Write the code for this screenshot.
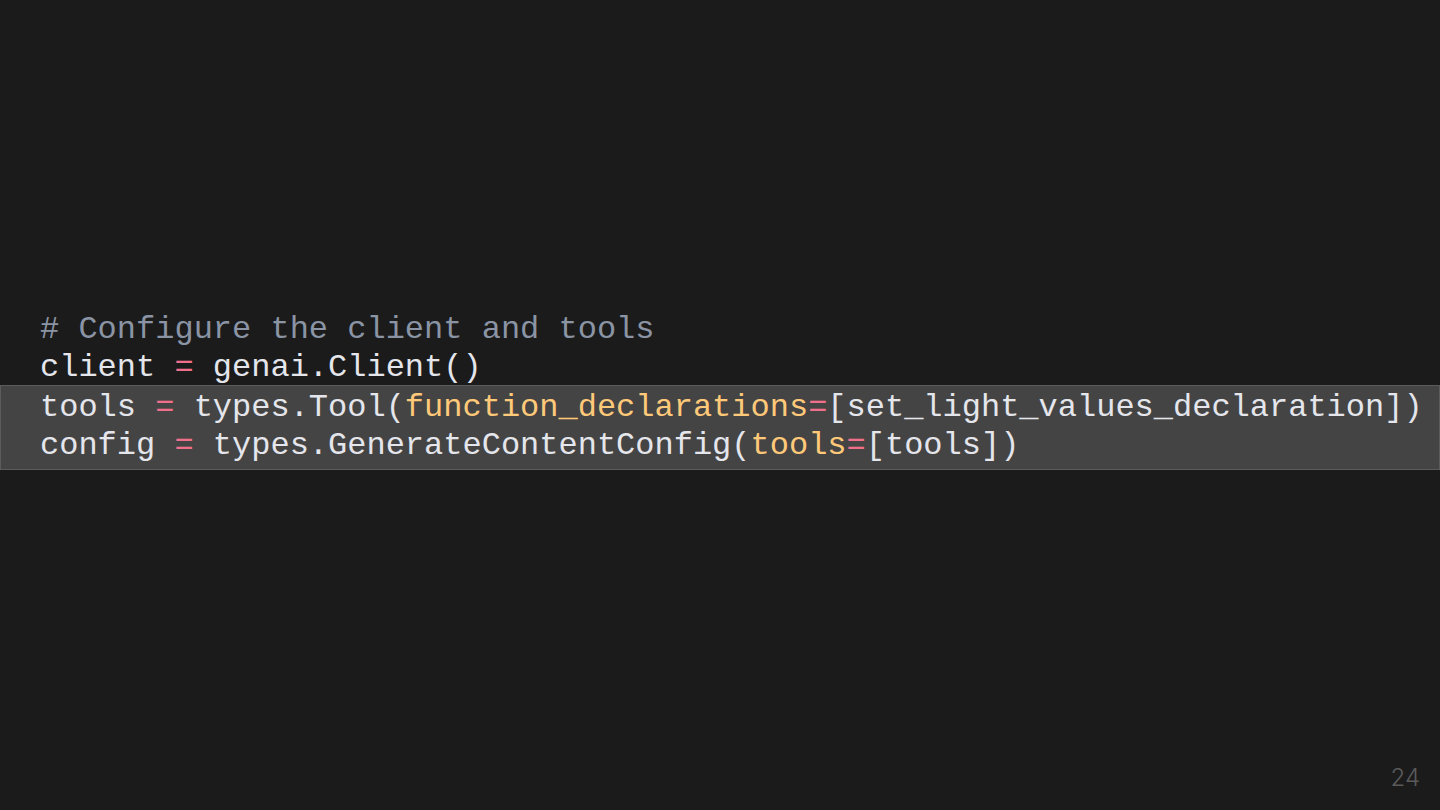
export default function App() {
  const mono = { fontFamily: '"Liberation Mono", "DejaVu Sans Mono", monospace' };

  return (
    <div className="relative w-full h-[810px] bg-[#1b1b1b] overflow-hidden pt-[311px]">
      <div className="text-[32px] leading-[38.4px] text-[#e4e6ec] whitespace-pre" style={mono}>
        {/* Plain lines */}
        <div className="px-[40px] text-[#8a94a4]"># Configure the client and tools</div>
        <div className="px-[40px]">
          client <span className="text-[#f0708c]">=</span> genai.Client()
        </div>

        {/* Highlighted lines */}
        <div className="-mt-[3px] border border-[#5c5c5c] bg-[#444444] pl-[39px] pt-[3px] pb-[3px]">
          <div>
            tools <span className="text-[#f0708c]">=</span> types.Tool(
            <span className="text-[#ffc97a]">function_declarations</span>
            <span className="text-[#f0708c]">=</span>[set_light_values_declaration])
          </div>
          <div>
            config <span className="text-[#f0708c]">=</span> types.GenerateContentConfig(
            <span className="text-[#ffc97a]">tools</span>
            <span className="text-[#f0708c]">=</span>[tools])
          </div>
        </div>
      </div>

      <div
        className="absolute right-[20px] bottom-[14px] text-[24px] font-light text-[#5a5a5a]"
        style={{ fontFamily: 'Inter, "Noto Sans", sans-serif' }}
      >
        24
      </div>
    </div>
  );
}
